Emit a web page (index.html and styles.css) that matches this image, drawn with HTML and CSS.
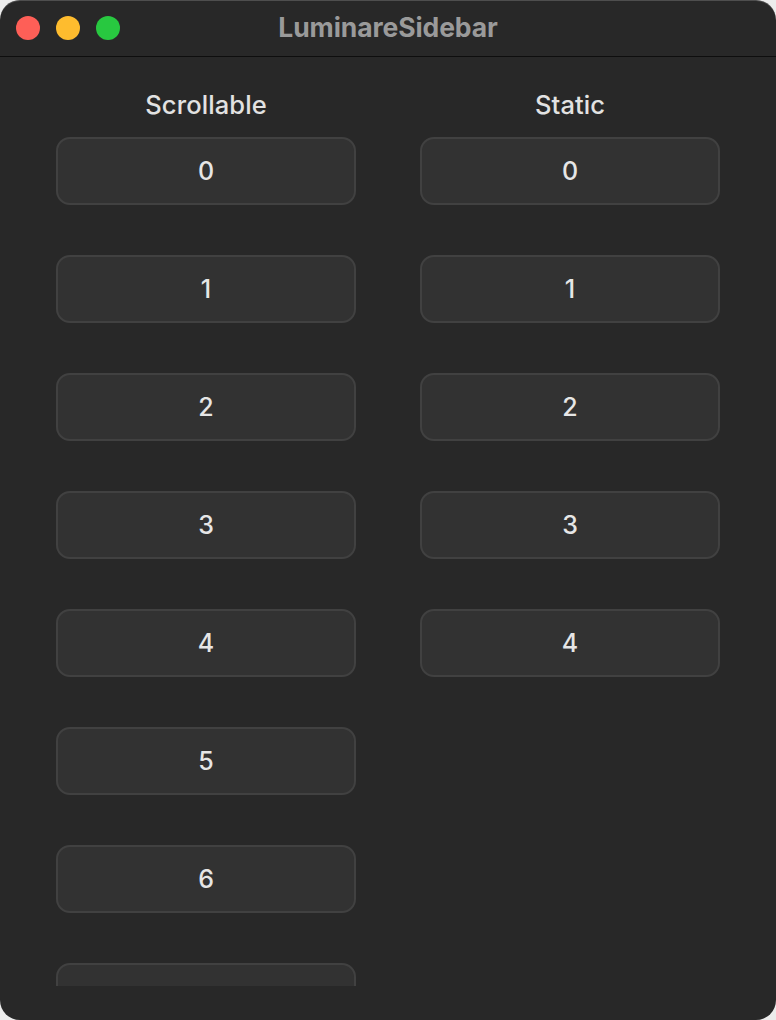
FILE: index.html
```html
<!DOCTYPE html>
<html>
<head>
<meta charset="utf-8">
<link rel="stylesheet" href="styles.css">
</head>
<body>
<div class="window">
  <div class="titlebar">
    <div class="lights">
      <span class="light red"></span>
      <span class="light yellow"></span>
      <span class="light green"></span>
    </div>
    <div class="title">LuminareSidebar</div>
  </div>
  <div class="content">
    <div class="column">
      <div class="heading">Scrollable</div>
      <div class="list scroll">
        <div class="item">0</div>
        <div class="item">1</div>
        <div class="item">2</div>
        <div class="item">3</div>
        <div class="item">4</div>
        <div class="item">5</div>
        <div class="item">6</div>
        <div class="item">7</div>
      </div>
    </div>
    <div class="column">
      <div class="heading">Static</div>
      <div class="list">
        <div class="item">0</div>
        <div class="item">1</div>
        <div class="item">2</div>
        <div class="item">3</div>
        <div class="item">4</div>
      </div>
    </div>
  </div>
</div>
</body>
</html>
```
FILE: styles.css
```css
html, body {
  margin: 0;
  padding: 0;
  background: #ececec;
}
.window {
  width: 776px;
  height: 1020px;
  box-sizing: border-box;
  border-radius: 20px;
  overflow: hidden;
  background: #282828;
  box-shadow: inset 0 1px 0 rgba(255,255,255,0.18);
  font-family: Inter, "Noto Sans", sans-serif;
  display: flex;
  flex-direction: column;
}
.titlebar {
  height: 56px;
  flex: none;
  border-bottom: 1px solid #0e0e0e;
  display: flex;
  align-items: center;
  justify-content: center;
  position: relative;
}
.lights {
  position: absolute;
  left: 16px;
  top: 16px;
  display: flex;
  gap: 16px;
}
.light {
  width: 24px;
  height: 24px;
  border-radius: 50%;
  display: block;
}
.red { background: #fe5f57; }
.yellow { background: #febc2e; }
.green { background: #28c840; }
.title {
  color: #9a9a9a;
  font-weight: 700;
  font-size: 26.5px;
  letter-spacing: -0.1px;
  margin-top: -2px;
}
.content {
  flex: 1;
  display: flex;
  gap: 64px;
  padding: 30px 56px 34px;
  min-height: 0;
}
.column {
  width: 300px;
  display: flex;
  flex-direction: column;
  gap: 15px;
  min-height: 0;
}
.heading {
  height: 35px;
  line-height: 35px;
  text-align: center;
  color: #e2e2e2;
  font-size: 25.5px;
  font-weight: 500;
  letter-spacing: 0.1px;
}
.list {
  display: flex;
  flex-direction: column;
  gap: 50px;
  min-height: 0;
}
.list.scroll {
  flex: 1;
  overflow: hidden;
}
.item {
  flex: none;
  height: 68px;
  box-sizing: border-box;
  border: 2px solid #414141;
  border-radius: 14px;
  background: #323232;
  color: #e6e6e6;
  font-size: 25px;
  font-weight: 500;
  display: flex;
  align-items: center;
  justify-content: center;
}
```
